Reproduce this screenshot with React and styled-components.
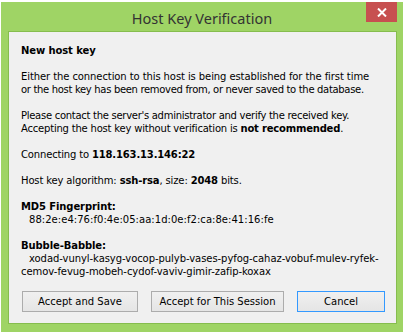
import React from "react";
import styled, { createGlobalStyle } from "styled-components";

const Global = createGlobalStyle`
  html, body { margin: 0; padding: 0; background: #ffffff; }
  body { width: 407px; height: 335px; overflow: hidden; }
`;

const Desktop = styled.div`
  width: 407px;
  height: 335px;
  padding: 2px 0 0 1px;
  box-sizing: border-box;
`;

const Window = styled.div`
  width: 402px;
  height: 330px;
  background: #9fd465;
  display: flex;
  flex-direction: column;
  box-sizing: border-box;
`;

const TitleBar = styled.div`
  position: relative;
  height: 29px;
  display: flex;
  align-items: center;
  justify-content: center;
  flex: none;
`;

const Title = styled.div`
  font-family: "Noto Sans", "Open Sans", sans-serif;
  font-size: 14.5px;
  color: #333333;
  padding-top: 2px;
`;

const CloseButton = styled.div`
  position: absolute;
  top: 0;
  right: 6px;
  width: 31px;
  height: 20px;
  background: #c75050;
  display: flex;
  align-items: center;
  justify-content: center;
`;

const Client = styled.div`
  margin: 0 6px 8px 7px;
  flex: 1;
  border: 1px solid #86bd4e;
  background: #f0f0f0;
  padding: 12px 11px 0 12px;
  display: flex;
  flex-direction: column;
  font-family: "DejaVu Sans", Verdana, sans-serif;
  font-size: 10px;
  color: #000000;
`;

const Line = styled.div`
  height: 13px;
  line-height: 13px;
  white-space: pre;
  padding-left: ${(p) => (p.$indent ? "8px" : "0")};
  letter-spacing: ${(p) => (p.$ls !== undefined ? p.$ls : -0.1)}px;
`;

const Blank = styled.div`
  height: 13px;
`;

const B = styled.b`
  font-weight: bold;
`;

const Buttons = styled.div`
  margin-top: 13px;
  display: flex;
  gap: 13px;
  padding-left: 1px;
`;

const Button = styled.div`
  width: ${(p) => p.$w}px;
  height: 21px;
  box-sizing: border-box;
  border: 1px solid ${(p) => (p.$default ? "#3399ff" : "#acacac")};
  background: linear-gradient(#f0f0f0, #e5e5e5);
  display: flex;
  align-items: center;
  justify-content: center;
  font-family: "DejaVu Sans", Verdana, sans-serif;
  font-size: 10px;
  color: #000;
`;

export default function App() {
  return (
    <>
      <Global />
      <Desktop>
        <Window>
          <TitleBar>
            <Title>Host Key Verification</Title>
            <CloseButton>
              <svg width="10" height="9" viewBox="0 0 10 9">
                <path d="M1 0.5 L9 8.5 M9 0.5 L1 8.5" stroke="#ffffff" strokeWidth="2" fill="none" />
              </svg>
            </CloseButton>
          </TitleBar>
          <Client>
            <Line><B>New host key</B></Line>
            <Blank />
            <Line $ls={-0.09}>Either the connection to this host is being established for the first time</Line>
            <Line $ls={-0.32}>or the host key has been removed from, or never saved to the database.</Line>
            <Blank />
            <Line $ls={-0.28}>Please contact the server's administrator and verify the received key.</Line>
            <Line $ls={-0.2}>Accepting the host key without verification is <B>not recommended</B>.</Line>
            <Blank />
            <Line $ls={-0.16}>Connecting to <B>118.163.13.146:22</B></Line>
            <Blank />
            <Line $ls={-0.14}>Host key algorithm: <B>ssh-rsa</B>, size: <B>2048</B> bits.</Line>
            <Blank />
            <Line><B>MD5 Fingerprint:</B></Line>
            <Line $indent $ls={0.04}>88:2e:e4:76:f0:4e:05:aa:1d:0e:f2:ca:8e:41:16:fe</Line>
            <Blank />
            <Line><B>Bubble-Babble:</B></Line>
            <Line $indent $ls={-0.06}>xodad-vunyl-kasyg-vocop-pulyb-vases-pyfog-cahaz-vobuf-mulev-ryfek-</Line>
            <Line $ls={-0.06}>cemov-fevug-mobeh-cydof-vaviv-gimir-zafip-koxax</Line>
            <Buttons>
              <Button $w={116}>Accept and Save</Button>
              <Button $w={133}>Accept for This Session</Button>
              <Button $w={88} $default>Cancel</Button>
            </Buttons>
          </Client>
        </Window>
      </Desktop>
    </>
  );
}
